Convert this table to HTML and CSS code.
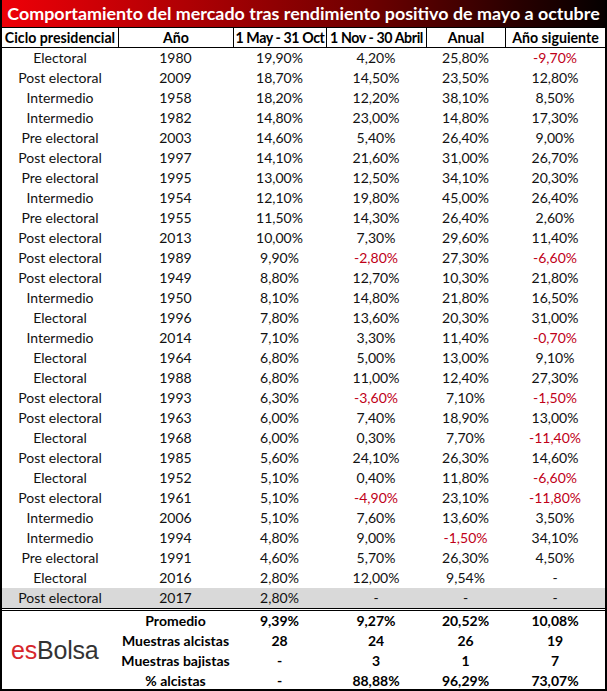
FILE: index.html
```html
<!DOCTYPE html>
<html lang="es">
<head>
<meta charset="utf-8">
<title>Comportamiento del mercado</title>
<link rel="stylesheet" href="styles.css">
</head>
<body>
<div class="sheet">
  <div class="title">Comportamiento del mercado tras rendimiento positivo de mayo a octubre</div>
  <div class="row head">
    <div>Ciclo presidencial</div><div>Año</div><div class="tight">1 May - 31 Oct</div><div class="tight">1 Nov - 30 Abril</div><div>Anual</div><div>Año siguiente</div>
  </div>
  <div class="body">
    <div class="row"><div>Electoral</div><div>1980</div><div>19,90%</div><div>4,20%</div><div>25,80%</div><div class="neg">-9,70%</div></div>
    <div class="row"><div>Post electoral</div><div>2009</div><div>18,70%</div><div>14,50%</div><div>23,50%</div><div>12,80%</div></div>
    <div class="row"><div>Intermedio</div><div>1958</div><div>18,20%</div><div>12,20%</div><div>38,10%</div><div>8,50%</div></div>
    <div class="row"><div>Intermedio</div><div>1982</div><div>14,80%</div><div>23,00%</div><div>14,80%</div><div>17,30%</div></div>
    <div class="row"><div>Pre electoral</div><div>2003</div><div>14,60%</div><div>5,40%</div><div>26,40%</div><div>9,00%</div></div>
    <div class="row"><div>Post electoral</div><div>1997</div><div>14,10%</div><div>21,60%</div><div>31,00%</div><div>26,70%</div></div>
    <div class="row"><div>Pre electoral</div><div>1995</div><div>13,00%</div><div>12,50%</div><div>34,10%</div><div>20,30%</div></div>
    <div class="row"><div>Intermedio</div><div>1954</div><div>12,10%</div><div>19,80%</div><div>45,00%</div><div>26,40%</div></div>
    <div class="row"><div>Pre electoral</div><div>1955</div><div>11,50%</div><div>14,30%</div><div>26,40%</div><div>2,60%</div></div>
    <div class="row"><div>Post electoral</div><div>2013</div><div>10,00%</div><div>7,30%</div><div>29,60%</div><div>11,40%</div></div>
    <div class="row"><div>Post electoral</div><div>1989</div><div>9,90%</div><div class="neg">-2,80%</div><div>27,30%</div><div class="neg">-6,60%</div></div>
    <div class="row"><div>Post electoral</div><div>1949</div><div>8,80%</div><div>12,70%</div><div>10,30%</div><div>21,80%</div></div>
    <div class="row"><div>Intermedio</div><div>1950</div><div>8,10%</div><div>14,80%</div><div>21,80%</div><div>16,50%</div></div>
    <div class="row"><div>Electoral</div><div>1996</div><div>7,80%</div><div>13,60%</div><div>20,30%</div><div>31,00%</div></div>
    <div class="row"><div>Intermedio</div><div>2014</div><div>7,10%</div><div>3,30%</div><div>11,40%</div><div class="neg">-0,70%</div></div>
    <div class="row"><div>Electoral</div><div>1964</div><div>6,80%</div><div>5,00%</div><div>13,00%</div><div>9,10%</div></div>
    <div class="row"><div>Electoral</div><div>1988</div><div>6,80%</div><div>11,00%</div><div>12,40%</div><div>27,30%</div></div>
    <div class="row"><div>Post electoral</div><div>1993</div><div>6,30%</div><div class="neg">-3,60%</div><div>7,10%</div><div class="neg">-1,50%</div></div>
    <div class="row"><div>Post electoral</div><div>1963</div><div>6,00%</div><div>7,40%</div><div>18,90%</div><div>13,00%</div></div>
    <div class="row"><div>Electoral</div><div>1968</div><div>6,00%</div><div>0,30%</div><div>7,70%</div><div class="neg">-11,40%</div></div>
    <div class="row"><div>Post electoral</div><div>1985</div><div>5,60%</div><div>24,10%</div><div>26,30%</div><div>14,60%</div></div>
    <div class="row"><div>Electoral</div><div>1952</div><div>5,10%</div><div>0,40%</div><div>11,80%</div><div class="neg">-6,60%</div></div>
    <div class="row"><div>Post electoral</div><div>1961</div><div>5,10%</div><div class="neg">-4,90%</div><div>23,10%</div><div class="neg">-11,80%</div></div>
    <div class="row"><div>Intermedio</div><div>2006</div><div>5,10%</div><div>7,60%</div><div>13,60%</div><div>3,50%</div></div>
    <div class="row"><div>Intermedio</div><div>1994</div><div>4,80%</div><div>9,00%</div><div class="neg">-1,50%</div><div>34,10%</div></div>
    <div class="row"><div>Pre electoral</div><div>1991</div><div>4,60%</div><div>5,70%</div><div>26,30%</div><div>4,50%</div></div>
    <div class="row"><div>Electoral</div><div>2016</div><div>2,80%</div><div>12,00%</div><div>9,54%</div><div>-</div></div>
    <div class="row gray"><div>Post electoral</div><div>2017</div><div>2,80%</div><div>-</div><div>-</div><div>-</div></div>
  </div>
  <div class="summary">
    <div class="logo"><span class="es">es</span><span class="bolsa">Bolsa</span></div>
    <div>Promedio</div><div>9,39%</div><div>9,27%</div><div>20,52%</div><div>10,08%</div>
    <div>Muestras alcistas</div><div>28</div><div>24</div><div>26</div><div>19</div>
    <div>Muestras bajistas</div><div>-</div><div>3</div><div>1</div><div>7</div>
    <div>% alcistas</div><div>-</div><div>88,88%</div><div>96,29%</div><div>73,07%</div>
  </div>
</div>
</body>
</html>
```

FILE: styles.css
```css
* { box-sizing: border-box; }
html, body { margin: 0; padding: 0; background: #fff; }
body { font-family: Lato, "Open Sans", sans-serif; color: #111; }

.sheet {
  width: 607px;
  height: 691px;
  border-left: 2px solid #000;
  border-right: 2px solid #000;
  border-bottom: 2px solid #000;
  overflow: hidden;
}

.title {
  height: 28px;
  border-bottom: 1px solid #000;
  background: linear-gradient(90deg, #ee0008 0%, #b00004 30%, #700000 60%, #2a0000 85%, #050000 100%);
  color: #fff;
  font-weight: 700;
  font-size: 17.9px;
  line-height: 27px;
  text-align: center;
  white-space: nowrap;
}

.row {
  display: grid;
  grid-template-columns: 116px 115px 93px 100px 79px 100px;
  height: 20px;
  font-size: 14px;
  line-height: 20px;
  text-align: center;
  white-space: nowrap;
}

.head {
  font-weight: 700;
  font-size: 14.2px;
  border-bottom: 1px solid #000;
  color: #000;
}
.head > div + div { border-left: 1px solid #000; }
.head > .tight { letter-spacing: -0.4px; overflow: hidden; }

.neg { color: #c00018; }

.gray { background: #d9d9d9; }

.summary {
  display: grid;
  grid-template-columns: 116px 115px 93px 100px 79px 100px;
  grid-template-rows: 20px 20px 20px 18px;
  border-top: 3px double #000;
  font-size: 14px;
  font-weight: 700;
  line-height: 20px;
  text-align: center;
  white-space: nowrap;
  color: #000;
}

.logo {
  grid-row: 1 / 5;
  display: flex;
  align-items: center;
  padding-left: 9px;
  font-family: "Liberation Sans", Arial, sans-serif;
  font-weight: 400;
  font-size: 25px;
  letter-spacing: -0.2px;
}
.es { color: #d7262c; }
.bolsa { color: #333; }
```
